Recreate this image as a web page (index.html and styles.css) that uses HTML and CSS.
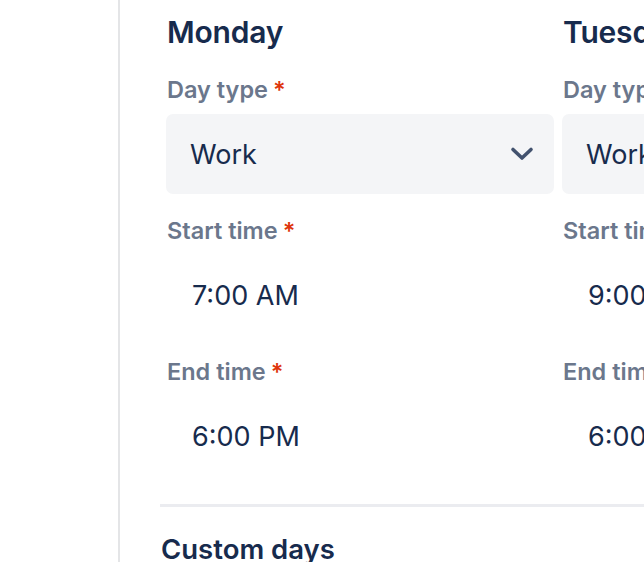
FILE: index.html
```html
<!DOCTYPE html>
<html>
<head>
<meta charset="utf-8">
<link rel="stylesheet" href="styles.css">
</head>
<body>
<div class="layout">
  <aside class="sidebar"></aside>
  <main class="main">
    <div class="days">
      <section class="day">
        <h2 class="day-title">Monday</h2>
        <label class="label">Day type<span class="req">*</span></label>
        <div class="select">
          <span>Work</span>
          <svg class="chev" width="24" height="16" viewBox="0 0 24 16"><path d="M3 3.5 L12 12 L21 3.5" fill="none" stroke="#42526E" stroke-width="3.6" stroke-linecap="round" stroke-linejoin="round"/></svg>
        </div>
        <label class="label gap">Start time<span class="req">*</span></label>
        <div class="time">7:00 AM</div>
        <label class="label gap">End time<span class="req">*</span></label>
        <div class="time">6:00 PM</div>
      </section>
      <section class="day">
        <h2 class="day-title">Tuesday</h2>
        <label class="label">Day type<span class="req">*</span></label>
        <div class="select">
          <span>Work</span>
          <svg class="chev" width="24" height="16" viewBox="0 0 24 16"><path d="M3 3.5 L12 12 L21 3.5" fill="none" stroke="#42526E" stroke-width="3.6" stroke-linecap="round" stroke-linejoin="round"/></svg>
        </div>
        <label class="label gap">Start time<span class="req">*</span></label>
        <div class="time">9:00 AM</div>
        <label class="label gap">End time<span class="req">*</span></label>
        <div class="time">6:00 PM</div>
      </section>
    </div>
    <hr class="divider">
    <h2 class="section-title">Custom days</h2>
  </main>
</div>
</body>
</html>
```

FILE: styles.css
```css
html, body {
  margin: 0;
  padding: 0;
  background: #ffffff;
  overflow: hidden;
}
body {
  font-family: Inter, "Noto Sans", "Liberation Sans", sans-serif;
  color: #172B4D;
  width: 644px;
  height: 562px;
}
.layout {
  display: flex;
  height: 562px;
}
.sidebar {
  width: 118px;
  flex: none;
  border-right: 2px solid #E4E5E7;
}
.main {
  flex: none;
  width: 900px;
  padding-left: 40px;
}
.days {
  display: grid;
  grid-template-columns: 388px 388px;
  column-gap: 8px;
  padding-left: 6px;
}
.day {
  display: flex;
  flex-direction: column;
  align-items: stretch;
}
.day-title {
  margin: 14px 0 0 1px;
  font-size: 30px;
  line-height: 36px;
  font-weight: 600;
  color: #172B4D;
  letter-spacing: -0.2px;
}
.label {
  display: block;
  margin: 24px 0 8px 1px;
  font-size: 23.5px;
  line-height: 32px;
  font-weight: 600;
  color: #6B778C;
}
.label.gap {
  margin-top: 21px;
}
.req {
  color: #DE350B;
  margin-left: 5px;
}
.select {
  height: 80px;
  box-sizing: border-box;
  background: #F4F5F7;
  border-radius: 7px;
  display: flex;
  align-items: center;
  justify-content: space-between;
  padding: 0 20px 0 24px;
  font-size: 27px;
  color: #172B4D;
}
.chev {
  display: block;
}
.time {
  height: 80px;
  display: flex;
  align-items: center;
  padding-left: 26px;
  font-size: 27px;
  color: #172B4D;
}
.divider {
  margin: 28px 0 0 0;
  border: none;
  height: 3px;
  background: #EBECF0;
}
.section-title {
  margin: 26px 0 0 1px;
  font-size: 27.5px;
  line-height: 32px;
  font-weight: 600;
  color: #172B4D;
}
```
